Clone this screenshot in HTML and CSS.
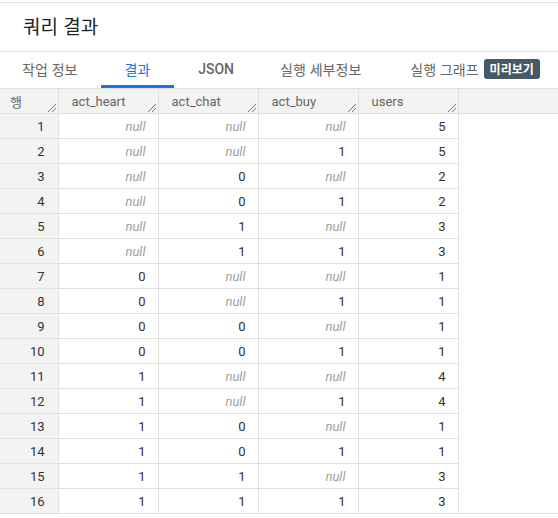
FILE: index.html
```html
<!DOCTYPE html>
<html lang="ko">
<head>
<meta charset="utf-8">
<link rel="stylesheet" href="styles.css">
</head>
<body>
<div class="panel">
  <div class="title-bar"><h1 class="title">쿼리 결과</h1></div>
  <nav class="tabs">
    <div class="tab">작업 정보</div>
    <div class="tab active">결과</div>
    <div class="tab json">JSON</div>
    <div class="tab">실행 세부정보</div>
    <div class="tab graph">실행 그래프 <span class="badge">미리보기</span></div>
  </nav>
  <table class="grid">
    <thead>
      <tr>
        <th class="rn">행<span class="grip"></span></th>
        <th>act_heart<span class="grip"></span></th>
        <th>act_chat<span class="grip"></span></th>
        <th>act_buy<span class="grip"></span></th>
        <th>users<span class="grip"></span></th>
        <th class="fill"></th>
      </tr>
    </thead>
    <tbody>
      <tr><td class="rn">1</td><td class="nl">null</td><td class="nl">null</td><td class="nl">null</td><td>5</td><td class="fill"></td></tr>
      <tr><td class="rn">2</td><td class="nl">null</td><td class="nl">null</td><td>1</td><td>5</td><td class="fill"></td></tr>
      <tr><td class="rn">3</td><td class="nl">null</td><td>0</td><td class="nl">null</td><td>2</td><td class="fill"></td></tr>
      <tr><td class="rn">4</td><td class="nl">null</td><td>0</td><td>1</td><td>2</td><td class="fill"></td></tr>
      <tr><td class="rn">5</td><td class="nl">null</td><td>1</td><td class="nl">null</td><td>3</td><td class="fill"></td></tr>
      <tr><td class="rn">6</td><td class="nl">null</td><td>1</td><td>1</td><td>3</td><td class="fill"></td></tr>
      <tr><td class="rn">7</td><td>0</td><td class="nl">null</td><td class="nl">null</td><td>1</td><td class="fill"></td></tr>
      <tr><td class="rn">8</td><td>0</td><td class="nl">null</td><td>1</td><td>1</td><td class="fill"></td></tr>
      <tr><td class="rn">9</td><td>0</td><td>0</td><td class="nl">null</td><td>1</td><td class="fill"></td></tr>
      <tr><td class="rn">10</td><td>0</td><td>0</td><td>1</td><td>1</td><td class="fill"></td></tr>
      <tr><td class="rn">11</td><td>1</td><td class="nl">null</td><td class="nl">null</td><td>4</td><td class="fill"></td></tr>
      <tr><td class="rn">12</td><td>1</td><td class="nl">null</td><td>1</td><td>4</td><td class="fill"></td></tr>
      <tr><td class="rn">13</td><td>1</td><td>0</td><td class="nl">null</td><td>1</td><td class="fill"></td></tr>
      <tr><td class="rn">14</td><td>1</td><td>0</td><td>1</td><td>1</td><td class="fill"></td></tr>
      <tr><td class="rn">15</td><td>1</td><td>1</td><td class="nl">null</td><td>3</td><td class="fill"></td></tr>
      <tr><td class="rn">16</td><td>1</td><td>1</td><td>1</td><td>3</td><td class="fill"></td></tr>
    </tbody>
  </table>
</div>
</body>
</html>
```
FILE: styles.css
```css
* { box-sizing: border-box; }
html, body { margin: 0; padding: 0; background: #fff; }
body {
  padding-top: 2px;
  font-family: Roboto, "Noto Sans CJK KR", sans-serif;
  color: #333;
}
.panel { width: 558px; }
.title-bar {
  border-top: 1px solid #e0e0e0;
  border-bottom: 1px solid #e0e0e0;
  height: 50px;
  display: flex;
  align-items: center;
  padding-left: 23px;
}
.title {
  margin: 0;
  font-family: "Noto Sans CJK KR", Roboto, sans-serif;
  font-size: 19px;
  font-weight: 400;
  color: #222;
  position: relative;
  top: -2px;
}
.tabs {
  display: flex;
  height: 36px;
  white-space: nowrap;
}
.tab {
  display: flex;
  align-items: center;
  padding: 0 24px 0 22px;
  font-family: "Noto Sans CJK KR", Roboto, sans-serif;
  font-size: 14px;
  color: #666;
  border-bottom: 3px solid transparent;
}
.tab.json { font-family: Roboto, sans-serif; font-weight: 500; padding-left: 24px; }
.tab.graph { padding-left: 25px; }
.tab.active { color: #1a73e8; border-bottom-color: #1a73e8; padding: 0 24px 0 23px; }
.badge {
  display: inline-block;
  margin-left: 5px;
  background: #455a64;
  color: #fff;
  font-size: 12px;
  font-weight: 700;
  line-height: 20px;
  padding: 0 6px;
  border-radius: 3px;
}
.grid {
  border-collapse: collapse;
  width: 558px;
  table-layout: fixed;
  font-size: 13px;
}
.grid th, .grid td {
  height: 25px;
  padding: 0 12px 0 0;
  border-bottom: 1px solid #e0e0e0;
  border-right: 1px solid #e0e0e0;
  text-align: right;
  white-space: nowrap;
}
.grid th {
  position: relative;
  background: #f3f3f3;
  border-top: 1px solid #e0e0e0;
  font-weight: 400;
  color: #666;
  text-align: left;
  padding-left: 13px;
  width: 100px;
}
.grid th.rn { width: 58px; padding-left: 10px; font-family: "Noto Sans CJK KR", sans-serif; }
.grid th.fill { width: auto; border-right: none; }
.grid td.rn { background: #f3f3f3; color: #333; padding-right: 13px; }
.grid td.fill { border: none; }
.grid tbody tr:last-child td.fill { border-bottom: 1px solid #e0e0e0; }
.grid td.nl { color: #9e9e9e; font-style: italic; }
.grip {
  position: absolute;
  right: 2px;
  bottom: 1px;
  width: 8px;
  height: 8px;
  background:
    linear-gradient(135deg, transparent 46%, #777 46%, #777 56%, transparent 56%) no-repeat,
    linear-gradient(135deg, transparent 46%, #777 46%, #777 56%, transparent 56%) no-repeat;
  background-size: 8px 8px, 4px 4px;
  background-position: 0 0, 4px 4px;
}
```
